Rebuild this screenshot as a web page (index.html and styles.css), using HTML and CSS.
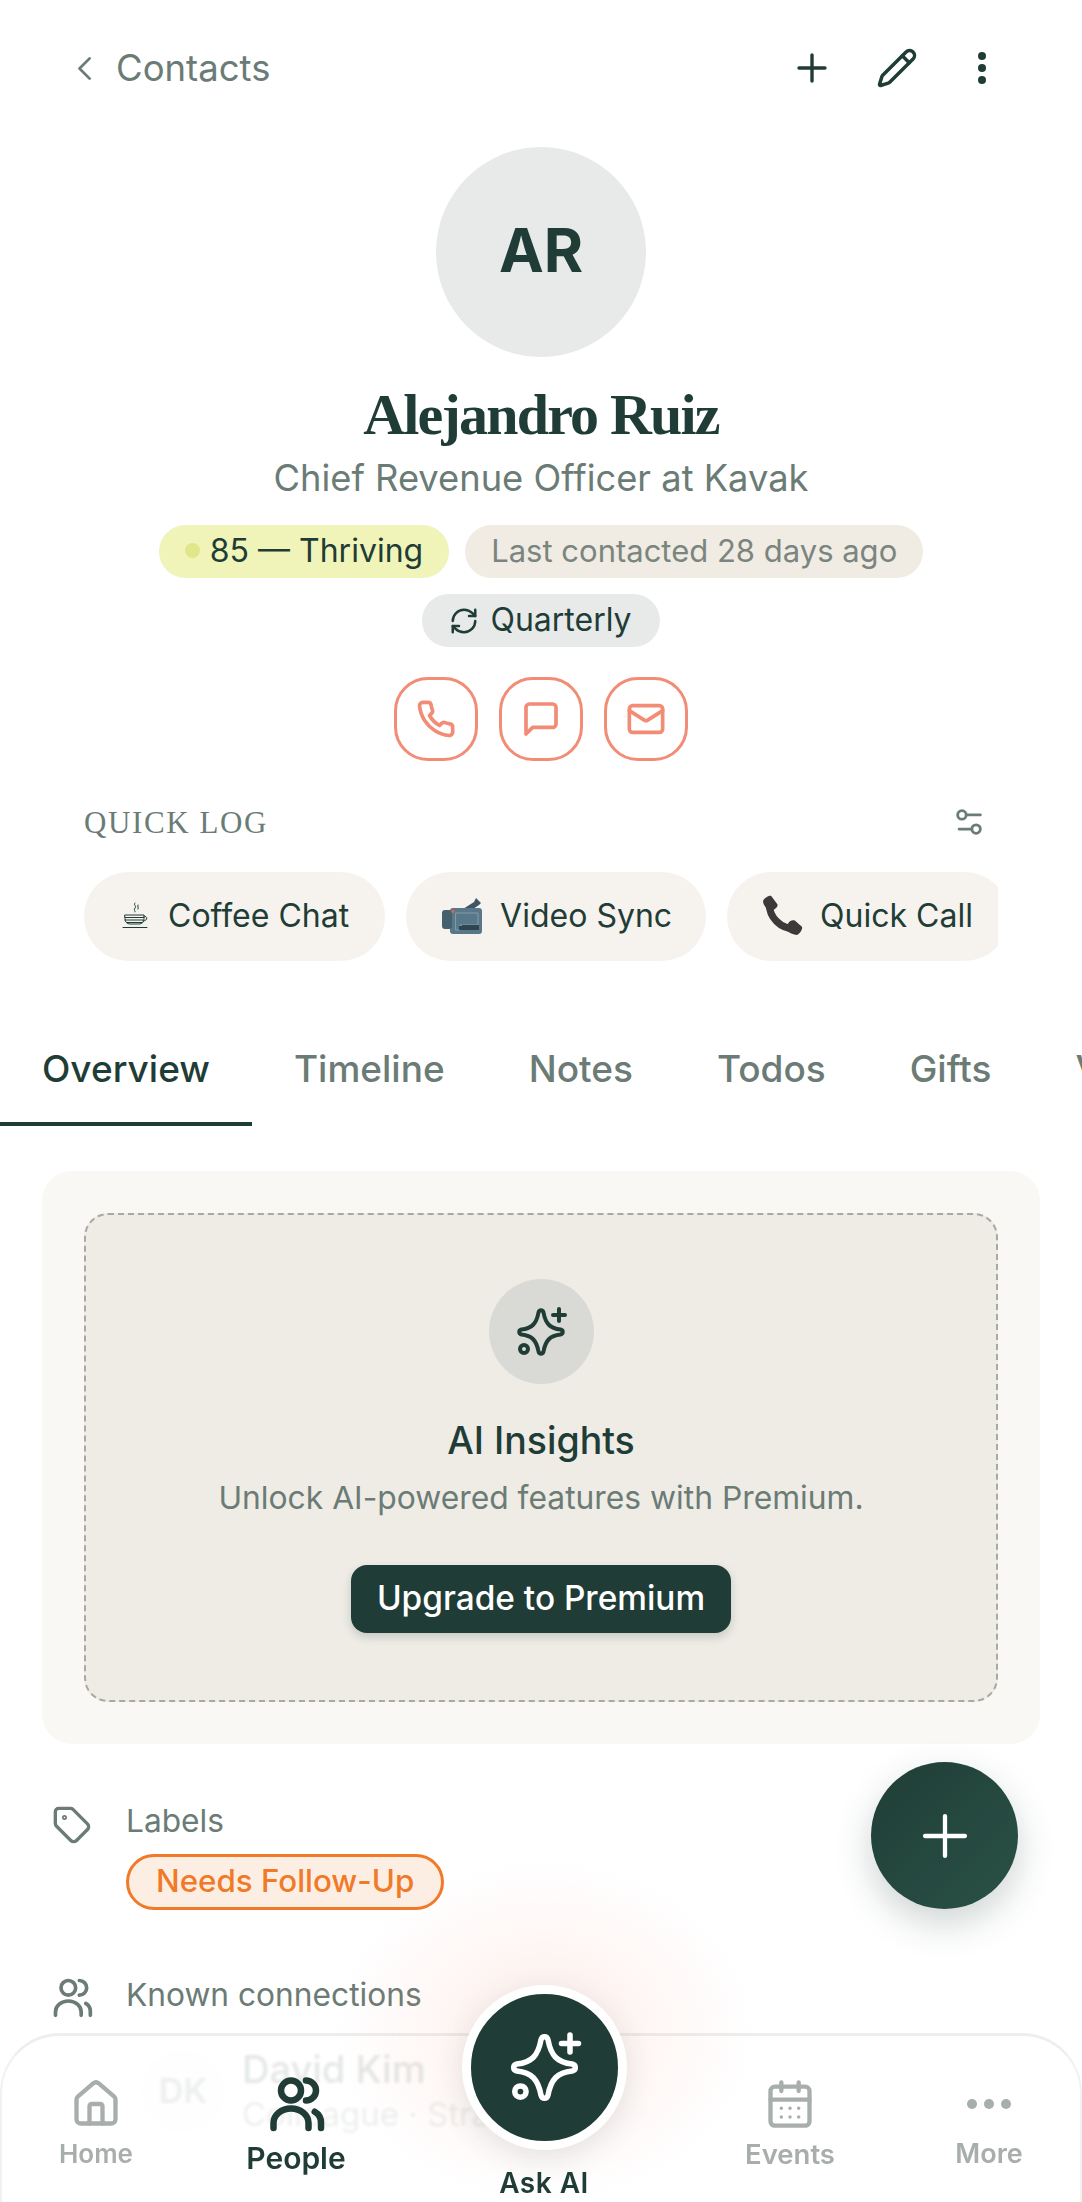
FILE: index.html
```html
<!DOCTYPE html>
<html lang="en">
<head>
  <meta charset="UTF-8">
  <meta name="viewport" content="width=device-width, initial-scale=1.0">
  <title>Alejandro Ruiz</title>
  <link rel="stylesheet" href="styles.css">
</head>
<body>
<div class="screen">
  <header class="topbar">
    <div class="back">
      <svg class="chevron" viewBox="0 0 14 24"><path d="M12 3 3 12l9 9"/></svg>
      <span>Contacts</span>
    </div>
    <div class="topbar-actions">
      <svg class="ico-plus" viewBox="0 0 30 30"><path d="M15 2v26M2 15h26"/></svg>
      <svg class="ico-pencil" viewBox="0 0 24 24"><path d="M21.174 6.812a1 1 0 0 0-3.986-3.987L3.842 16.174a2 2 0 0 0-.5.83l-1.321 4.352a.5.5 0 0 0 .623.622l4.353-1.32a2 2 0 0 0 .83-.497z"/><path d="m15 5 4 4"/></svg>
      <div class="kebab"><i></i><i></i><i></i></div>
    </div>
  </header>

  <section class="profile">
    <div class="avatar">AR</div>
    <h1 class="name">Alejandro Ruiz</h1>
    <p class="role">Chief Revenue Officer at Kavak</p>
    <div class="pills">
      <span class="pill pill-score"><i class="dot"></i>85 — Thriving</span>
      <span class="pill pill-last">Last contacted 28 days ago</span>
    </div>
    <span class="pill pill-freq">
      <svg viewBox="0 0 24 24"><path d="M3 12a9 9 0 0 1 9-9 9.75 9.75 0 0 1 6.74 2.74L21 8"/><path d="M21 3v5h-5"/><path d="M21 12a9 9 0 0 1-9 9 9.75 9.75 0 0 1-6.74-2.74L3 16"/><path d="M8 16H3v5"/></svg>
      Quarterly
    </span>
    <div class="contact-actions">
      <div class="contact-btn"><svg viewBox="0 0 24 24"><path d="M22 16.92v3a2 2 0 0 1-2.18 2 19.79 19.79 0 0 1-8.63-3.07 19.5 19.5 0 0 1-6-6 19.79 19.79 0 0 1-3.07-8.67A2 2 0 0 1 4.11 2h3a2 2 0 0 1 2 1.72 12.84 12.84 0 0 0 .7 2.81 2 2 0 0 1-.45 2.11L8.09 9.91a16 16 0 0 0 6 6l1.27-1.27a2 2 0 0 1 2.11-.45 12.84 12.84 0 0 0 2.81.7A2 2 0 0 1 22 16.92z"/></svg></div>
      <div class="contact-btn"><svg viewBox="0 0 24 24"><path d="M21 15a2 2 0 0 1-2 2H7l-4 4V5a2 2 0 0 1 2-2h14a2 2 0 0 1 2 2z"/></svg></div>
      <div class="contact-btn"><svg viewBox="0 0 24 24"><rect x="2" y="4" width="20" height="16" rx="2"/><path d="m22 7-8.97 5.7a1.94 1.94 0 0 1-2.06 0L2 7"/></svg></div>
    </div>
  </section>

  <section class="quick-log">
    <div class="quick-head">
      <h2>QUICK LOG</h2>
      <svg viewBox="0 0 24 24"><path d="M20 7h-9"/><path d="M14 17H5"/><circle cx="17" cy="17" r="3"/><circle cx="7" cy="7" r="3"/></svg>
    </div>
    <div class="chips">
      <div class="chip">
        <svg class="emoji-coffee" viewBox="0 0 30 30"><path d="M15 2c-2 2 2 3 0 5s1 3 0 4M18 4c-1 2 1 2 0 4"/><path d="M5 14h19v4c0 3-2 5-5 5h-9c-3 0-5-2-5-5zM24 15c4 0 4 5-1 5M5 16.500h19M5 19h18M7 21.500h15M3 26.500h24"/></svg>
        Coffee Chat
      </div>
      <div class="chip">
        <svg class="emoji-video" viewBox="0 0 40 36"><path d="M21 11 32 4l2-4 5 5-2 2-9 6z" fill="#3f5563"/><rect x="8" y="10" width="32" height="26" rx="3" fill="#587789"/><rect x="0" y="12" width="10" height="19" rx="3" fill="#45606f"/><path d="M14 15h22v12H18v5h-4z" fill="none" stroke="#7fa0ad" stroke-width="1"/><path d="M17 32v-4h3v-1h17v5z" fill="#2f4652"/><circle cx="11" cy="13.500" r="1.800" fill="#d9634a"/></svg>
        Video Sync
      </div>
      <div class="chip">
        <svg class="emoji-phone" viewBox="0 0 41 40"><path d="M8 8c0 14 11 25 25 25" fill="none" stroke="#3b3a39" stroke-width="7"/><path d="M2 6c1-3 6-6 8-5l6 8c1 2-2 5-5 6l-3 1C5 13 2 9 2 6zM25 30l2-3c1-2 4-3 6-2l7 6c1 2-2 7-5 8-3 0-8-2-11-5z" fill="#3b3a39"/></svg>
        Quick Call
      </div>
    </div>
  </section>

  <nav class="tabs">
    <span class="tab tab-active">Overview</span>
    <span class="tab">Timeline</span>
    <span class="tab">Notes</span>
    <span class="tab">Todos</span>
    <span class="tab">Gifts</span>
    <span class="tab">Vault</span>
  </nav>

  <section class="insights-card">
    <div class="insights-inner">
      <div class="insights-icon">
        <svg viewBox="0 0 60 60"><path d="M27.5 10.500c.8-3 4.200-3 5 0 2 11 6.500 16 17 17 3 .8 3 4.200 0 5-10.500 1-15 6-17 17-.8 3-4.200 3-5 0-2-11-6.500-16-17-17-3-.8-3-4.200 0-5 10.500-1 15-6 17-17z"/><path d="M48 7v12M42 13h12"/><circle cx="13" cy="47" r="4"/></svg>
      </div>
      <h3>AI Insights</h3>
      <p>Unlock AI-powered features with Premium.</p>
      <div class="upgrade-btn">Upgrade to Premium</div>
    </div>
  </section>

  <section class="info-row row-labels">
    <svg class="info-icon" viewBox="0 0 24 24"><path d="M12.586 2.586A2 2 0 0 0 11.172 2H4a2 2 0 0 0-2 2v7.172a2 2 0 0 0 .586 1.414l8.704 8.704a2.426 2.426 0 0 0 3.420 0l6.580-6.580a2.426 2.426 0 0 0 0-3.420z"/><circle cx="7.500" cy="7.500" r=".5"/></svg>
    <div>
      <div class="info-label">Labels</div>
      <span class="tag">Needs Follow-Up</span>
    </div>
  </section>

  <section class="info-row row-known">
    <svg class="info-icon" viewBox="0 0 24 24"><circle cx="10" cy="7" r="4"/><path d="M16 3a4 4 0 0 1 0 8"/><path d="M3 22v-2a6 5 0 0 1 14 0v2"/><path d="M19.500 15.500a5 5 0 0 1 2.500 4.500v2"/></svg>
    <div class="info-label">Known connections</div>
  </section>

  <div class="connection">
    <div class="conn-avatar">DK</div>
    <div>
      <div class="conn-name">David Kim</div>
      <div class="conn-sub">Colleague · Strategy</div>
    </div>
  </div>

  <div class="fab"><svg viewBox="0 0 30 30"><path d="M15 2v26M2 15h26"/></svg></div>

  <div class="tabbar">
    <div class="nav-item">
      <div class="nav-icon"><svg viewBox="0 0 24 24"><path d="M15 21v-8a1 1 0 0 0-1-1h-4a1 1 0 0 0-1 1v8"/><path d="M3 10a2 2 0 0 1 .709-1.528l7-5.999a2 2 0 0 1 2.582 0l7 5.999A2 2 0 0 1 21 10v9a2 2 0 0 1-2 2H5a2 2 0 0 1-2-2z"/></svg></div>
      <span>Home</span>
    </div>
    <div class="nav-item nav-active">
      <div class="nav-icon"><svg viewBox="0 0 24 24"><circle cx="10" cy="7" r="4"/><path d="M16 3a4 4 0 0 1 0 8"/><path d="M3 22v-2a6 5 0 0 1 14 0v2"/><path d="M19.500 15.500a5 5 0 0 1 2.500 4.500v2"/></svg></div>
      <span>People</span>
    </div>
    <div></div>
    <div class="nav-item">
      <div class="nav-icon"><svg viewBox="0 0 24 24"><rect x="3" y="4" width="18" height="18" rx="2"/><path d="M16 2v4M8 2v4M3 10h18"/><path class="cal-dots" d="M8 14h.01M12 14h.01M16 14h.01M8 18h.01M12 18h.01M16 18h.01"/></svg></div>
      <span>Events</span>
    </div>
    <div class="nav-item">
      <div class="nav-icon"><div class="more-dots"><i></i><i></i><i></i></div></div>
      <span>More</span>
    </div>
  </div>

  <div class="ask-glow"></div>
  <div class="ask-ai">
    <div class="ask-btn">
      <svg viewBox="0 0 60 60"><path d="M27.5 10.500c.8-3 4.200-3 5 0 2 11 6.500 16 17 17 3 .8 3 4.200 0 5-10.500 1-15 6-17 17-.8 3-4.200 3-5 0-2-11-6.500-16-17-17-3-.8-3-4.200 0-5 10.500-1 15-6 17-17z"/><path d="M48 7v12M42 13h12"/><circle cx="13" cy="47" r="4"/></svg>
    </div>
    <span>Ask AI</span>
  </div>
</div>
</body>
</html>
```

FILE: styles.css
```css
* {
  box-sizing: border-box;
}
body {
  margin: 0;
  background: #fff;
  font-family: Inter, "Noto Sans", sans-serif;
  color: #1f3d36;
}
svg {
  fill: none;
  stroke: currentColor;
  stroke-linecap: round;
  stroke-linejoin: round;
  stroke-width: 2;
  flex-shrink: 0;
}
.screen {
  position: relative;
  width: 1082px;
  height: 2202px;
  overflow: hidden;
  background: #fff;
}

/* top bar */
.topbar {
  height: 136px;
  padding: 0 76px;
  display: flex;
  align-items: center;
  justify-content: space-between;
}
.back {
  display: flex;
  align-items: center;
  gap: 24px;
  font-size: 36.500px;
  color: #6b7b75;
}
.chevron {
  width: 16px;
  height: 27px;
  stroke-width: 2.500;
}
.topbar-actions {
  display: flex;
  align-items: center;
  margin-right: 20px;
}
.ico-plus {
  width: 30px;
  height: 30px;
  stroke-width: 3.400;
}
.ico-pencil {
  width: 42px;
  height: 42px;
  margin-left: 49px;
  stroke-width: 2;
}
.kebab {
  display: flex;
  flex-direction: column;
  gap: 4px;
  margin-left: 60px;
}
.kebab i {
  width: 8px;
  height: 8px;
  border-radius: 50%;
  background: #1f3d36;
}

/* profile */
.profile {
  display: flex;
  flex-direction: column;
  align-items: center;
  padding-top: 11px;
}
.avatar {
  width: 210px;
  height: 210px;
  padding-bottom: 4px;
  border-radius: 50%;
  background: #e8eaea;
  display: flex;
  align-items: center;
  justify-content: center;
  font-size: 60px;
  font-weight: 700;
}
.name {
  margin: 28px 0 2px;
  font-family: "Liberation Serif", serif;
  font-size: 58px;
  line-height: 60px;
  font-weight: 700;
  letter-spacing: -1.800px;
}
.role {
  margin: 10px 0 0;
  font-size: 36.300px;
  line-height: 42px;
  color: #6b7b75;
}
.pills {
  display: flex;
  gap: 16px;
  margin-top: 26px;
}
.pill {
  height: 53px;
  padding: 0 26px 2px;
  border-radius: 27px;
  display: inline-flex;
  align-items: center;
  font-size: 32px;
}
.dot {
  width: 15px;
  height: 15px;
  border-radius: 50%;
  background: #e0e68a;
  margin-right: 10px;
}
.pill-score {
  background: #f0f4b8;
}
.pill-last {
  background: #f0ece4;
  color: #7b857f;
  font-size: 31px;
  padding: 0 26px 2px;
}
.pill-freq {
  background: #e8eaea;
  margin-top: 16px;
  padding: 0 28px 2px 27px;
}
.pill-freq svg {
  width: 30px;
  height: 30px;
  margin: 3px 11px 0 0;
}
.contact-actions {
  display: flex;
  gap: 21px;
  margin-top: 30px;
}
.contact-btn {
  width: 84px;
  height: 84px;
  border: 3px solid #f28c75;
  border-radius: 34px;
  color: #f28c75;
  display: flex;
  align-items: center;
  justify-content: center;
}
.contact-btn svg {
  width: 40px;
  height: 40px;
  stroke-width: 2.200;
}

/* quick log */
.quick-log {
  padding: 0 84px;
  margin-top: 42px;
}
.quick-head {
  height: 40px;
  display: flex;
  align-items: center;
  justify-content: space-between;
  color: #6b7b75;
}
.quick-head h2 {
  margin: 0;
  font-family: "Liberation Serif", serif;
  font-size: 31px;
  font-weight: 400;
  letter-spacing: 1.600px;
}
.quick-head svg {
  width: 34px;
  height: 34px;
  margin: 0 12px 3px 0;
}
.chips {
  display: flex;
  gap: 21px;
  margin-top: 29px;
  overflow: hidden;
}
.chip {
  flex-shrink: 0;
  height: 89px;
  padding: 0 36px 2px;
  border-radius: 45px;
  background: #f6f2ee;
  display: flex;
  align-items: center;
  gap: 18px;
  font-size: 32px;
  white-space: nowrap;
}
.chip:nth-child(2) {
  padding-right: 34px;
}
.emoji-coffee {
  width: 30px;
  height: 30px;
  stroke-width: 1;
}
.emoji-video {
  width: 40px;
  height: 36px;
  stroke: none;
}
.emoji-phone {
  width: 42px;
  height: 41px;
  margin: 0 -1px 0 -2px;
  stroke: none;
}

/* tabs */
.tabs {
  height: 114px;
  margin-top: 51px;
  display: flex;
  white-space: nowrap;
}
.tab {
  padding: 2px 42px 0;
  display: flex;
  align-items: center;
  font-size: 37px;
  font-weight: 500;
  color: #6b7b75;
  border-bottom: 4px solid transparent;
}
.tab-active {
  color: #1f3d36;
  border-bottom-color: #1f3d36;
}

/* ai card */
.insights-card {
  margin: 45px 42px 0;
  padding: 42px;
  height: 573px;
  border-radius: 30px;
  background: #faf8f4;
}
.insights-inner {
  height: 489px;
  padding-top: 64px;
  border: 2px dashed #aaa8a2;
  border-radius: 24px;
  background: #efece6;
  display: flex;
  flex-direction: column;
  align-items: center;
}
.insights-icon {
  width: 105px;
  height: 105px;
  border-radius: 50%;
  background: #d9dad5;
  display: flex;
  align-items: center;
  justify-content: center;
}
.insights-icon svg {
  width: 60px;
  height: 60px;
  stroke-width: 4;
}
.insights-inner h3 {
  margin: 35px 0 0;
  font-size: 37.500px;
  line-height: 44px;
  font-weight: 500;
}
.insights-inner p {
  margin: 15px 0 0;
  font-size: 31.800px;
  line-height: 40px;
  color: #6b7b75;
}
.upgrade-btn {
  margin-top: 47px;
  width: 380px;
  height: 68px;
  padding-bottom: 3px;
  border-radius: 16px;
  background: #1f3d36;
  color: #fff;
  font-size: 33.400px;
  font-weight: 500;
  display: flex;
  align-items: center;
  justify-content: center;
  box-shadow: 0 4px 10px rgba(31,61,54,0.2);
}

/* info rows */
.info-row {
  display: flex;
  align-items: flex-start;
  padding-left: 52px;
  gap: 34px;
  color: #6b7b75;
}
.info-icon {
  width: 40px;
  height: 40px;
}
.row-labels {
  margin-top: 59px;
}
.row-labels .info-icon {
  margin-top: 2px;
}
.row-known {
  margin-top: 67px;
}
.row-known .info-icon {
  width: 44px;
  height: 44px;
  margin: -2px -2px 0 -2px;
}
.info-label {
  font-size: 31.700px;
  line-height: 36px;
}
.tag {
  margin-top: 15px;
  height: 56px;
  padding: 0 27px 2px;
  border: 3px solid #f07a28;
  border-radius: 28px;
  background: #fdeee4;
  color: #f07a28;
  font-size: 31.300px;
  font-weight: 500;
  display: inline-flex;
  align-items: center;
}
.connection {
  display: flex;
  align-items: center;
  gap: 17px;
  padding-left: 141px;
  margin-top: 28px;
}
.conn-avatar {
  width: 84px;
  height: 84px;
  border-radius: 50%;
  background: #f3f4f4;
  display: flex;
  align-items: center;
  justify-content: center;
  font-size: 34px;
  font-weight: 600;
  color: #6b7b75;
}
.conn-name {
  font-size: 38px;
  line-height: 44px;
  font-weight: 500;
}
.conn-sub {
  margin-top: 3px;
  font-size: 33px;
  line-height: 40px;
  color: #6b7b75;
}

/* floating add button */
.fab {
  position: absolute;
  left: 871px;
  top: 1762px;
  width: 147px;
  height: 147px;
  border-radius: 50%;
  background: linear-gradient(135deg, #1f3d36, #2a5247);
  color: #fff;
  display: flex;
  align-items: center;
  justify-content: center;
  box-shadow: 0 14px 36px rgba(31,61,54,0.22);
}
.fab svg {
  width: 46px;
  height: 46px;
  stroke-width: 2.800;
}

/* bottom tab bar */
.tabbar {
  position: absolute;
  left: 0;
  right: 0;
  bottom: 0;
  height: 169px;
  padding-top: 43px;
  display: grid;
  grid-template-columns: 188px 212px 1fr 216px 182px;
  background: rgba(255,255,255,0.88);
  backdrop-filter: blur(1.500px);
  border-top: 3px solid #eeeeed;
  border-left: 2px solid #f2f2f1;
  border-right: 2px solid #f2f2f1;
  border-radius: 60px 60px 0 0;
}
.nav-item {
  display: flex;
  flex-direction: column;
  align-items: center;
  font-size: 26px;
  font-weight: 600;
  color: #a8aeab;
}
.nav-item:nth-child(4) {
  font-size: 27.500px;
}
.nav-item:nth-child(5) {
  font-size: 27px;
}
.nav-icon {
  height: 50px;
  display: flex;
  align-items: center;
  justify-content: center;
}
.nav-icon svg {
  width: 52px;
  height: 52px;
}
.nav-item span {
  margin-top: 10px;
  line-height: 30px;
}
.nav-active {
  color: #1f3d36;
  font-size: 30px;
}
.nav-active .nav-icon {
  margin-top: -1px;
}
.nav-active svg {
  width: 60px;
  height: 60px;
  stroke-width: 2.600;
}
.nav-active span {
  margin-top: 15px;
}
.cal-dots {
  stroke-width: 1.600;
}
.more-dots {
  display: flex;
  gap: 7px;
}
.more-dots i {
  width: 10px;
  height: 10px;
  border-radius: 50%;
  background: #a8aeab;
}

/* ask ai */
.ask-glow {
  position: absolute;
  left: 334px;
  top: 1860px;
  width: 420px;
  height: 342px;
  background: radial-gradient(closest-side, rgba(242,140,117,0.15), rgba(242,140,117,0));
}
.ask-ai {
  position: absolute;
  left: 444px;
  top: 1985px;
  width: 200px;
  display: flex;
  flex-direction: column;
  align-items: center;
  font-size: 28px;
  font-weight: 600;
  letter-spacing: 0.500px;
}
.ask-btn {
  width: 165px;
  height: 165px;
  border-radius: 50%;
  background: #1f3d36;
  border: 9px solid #fff;
  color: #fff;
  display: flex;
  align-items: center;
  justify-content: center;
  box-shadow: 0 8px 30px rgba(31,61,54,0.12);
}
.ask-btn svg {
  width: 85px;
  height: 85px;
  stroke-width: 3.900;
}
.ask-ai span {
  margin-top: 18px;
  line-height: 30px;
}
```
